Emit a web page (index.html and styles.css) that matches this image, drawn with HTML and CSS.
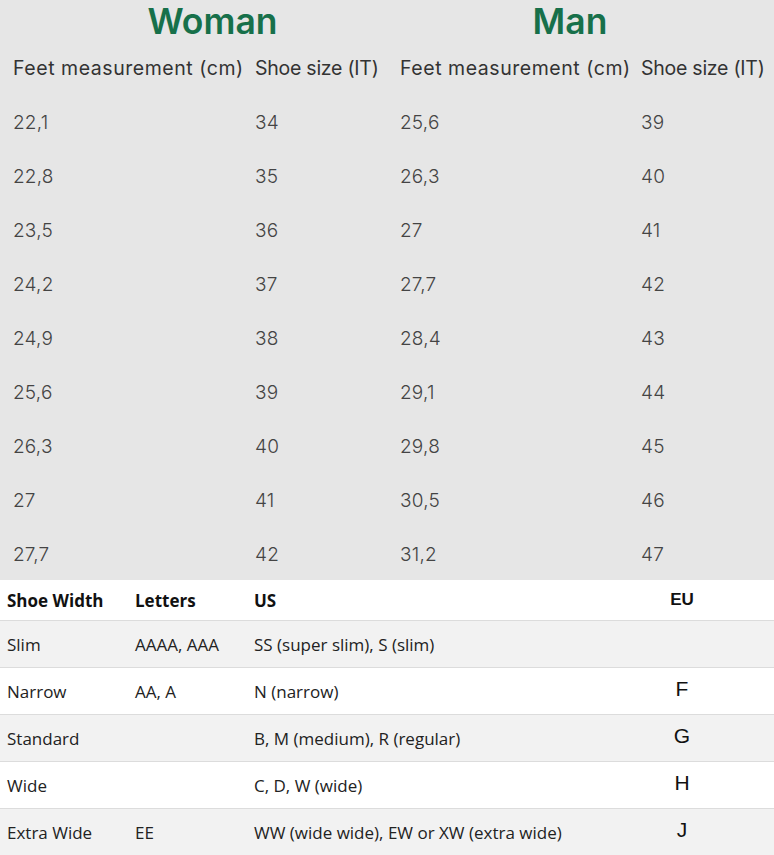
FILE: index.html
```html
<!DOCTYPE html>
<html>
<head>
<meta charset="utf-8">
<link rel="stylesheet" href="styles.css">
</head>
<body>
<section class="sizes">
  <div class="title woman">Woman</div>
  <div class="title man">Man</div>
  <div class="hd">Feet measurement (cm)</div><div class="hd s">Shoe size (IT)</div><div class="hd">Feet measurement (cm)</div><div class="hd s">Shoe size (IT)</div>
  <div class="v">22,1</div><div class="v">34</div><div class="v">25,6</div><div class="v">39</div>
  <div class="v">22,8</div><div class="v">35</div><div class="v">26,3</div><div class="v">40</div>
  <div class="v">23,5</div><div class="v">36</div><div class="v">27</div><div class="v">41</div>
  <div class="v">24,2</div><div class="v">37</div><div class="v">27,7</div><div class="v">42</div>
  <div class="v">24,9</div><div class="v">38</div><div class="v">28,4</div><div class="v">43</div>
  <div class="v">25,6</div><div class="v">39</div><div class="v">29,1</div><div class="v">44</div>
  <div class="v">26,3</div><div class="v">40</div><div class="v">29,8</div><div class="v">45</div>
  <div class="v">27</div><div class="v">41</div><div class="v">30,5</div><div class="v">46</div>
  <div class="v">27,7</div><div class="v">42</div><div class="v">31,2</div><div class="v">47</div>
</section>
<section class="width">
  <div class="row head"><div class="cell">Shoe Width</div><div class="cell">Letters</div><div class="cell">US</div><div class="cell eu">EU</div></div>
  <div class="row alt"><div class="cell">Slim</div><div class="cell">AAAA, AAA</div><div class="cell">SS (super slim), S (slim)</div><div class="cell eu"></div></div>
  <div class="row"><div class="cell">Narrow</div><div class="cell">AA, A</div><div class="cell">N (narrow)</div><div class="cell eu">F</div></div>
  <div class="row alt"><div class="cell">Standard</div><div class="cell"></div><div class="cell">B, M (medium), R (regular)</div><div class="cell eu">G</div></div>
  <div class="row"><div class="cell">Wide</div><div class="cell"></div><div class="cell">C, D, W (wide)</div><div class="cell eu">H</div></div>
  <div class="row alt"><div class="cell">Extra Wide</div><div class="cell">EE</div><div class="cell">WW (wide wide), EW or XW (extra wide)</div><div class="cell eu">J</div></div>
</section>
</body>
</html>
```
FILE: styles.css
```css
html, body { margin: 0; padding: 0; background: #fff; }
body { width: 774px; height: 855px; overflow: hidden; }

.sizes {
  background: #e6e6e6;
  height: 580px;
  padding-left: 13px;
  display: grid;
  grid-template-columns: 242px 145px 241px 1fr;
  grid-template-rows: 41px repeat(10, 54px);
  align-items: center;
  font-family: "Inter", "Noto Sans", sans-serif;
  overflow: hidden;
}
.title {
  grid-column: span 2;
  text-align: center;
  color: #17704a;
  font-size: 35.5px;
  font-weight: 600;
  line-height: 41px;
  margin-top: 2px;
}
.woman { padding-left: 12px; }
.man { padding-right: 34px; }
.hd {
  font-size: 19.5px;
  color: #333;
  white-space: nowrap;
  letter-spacing: 0.55px;
}
.hd.s { letter-spacing: -0.25px; }
.v {
  font-size: 19px;
  font-weight: 300;
  color: #444;
  letter-spacing: 0.2px;
}

.width {
  font-family: "Open Sans", "Noto Sans", sans-serif;
  font-size: 17px;
  color: #222;
}
.row {
  display: grid;
  grid-template-columns: 128px 119px 353px 164px 1fr;
  height: 46px;
  border-bottom: 1px solid #dcdcdc;
  align-items: center;
}
.row.head {
  height: 40px;
  font-weight: 700;
  font-size: 17px;
  color: #111;
}
.row.alt { background: #f2f2f2; }
.cell { padding-left: 7px; white-space: nowrap; }
.cell.eu {
  padding-left: 0;
  text-align: center;
  font-family: "Liberation Sans", Arial, sans-serif;
  font-size: 21px;
  color: #111;
  padding-bottom: 5px;
}
.row.head .cell.eu {
  font-size: 17px;
  padding-bottom: 0;
}
```
